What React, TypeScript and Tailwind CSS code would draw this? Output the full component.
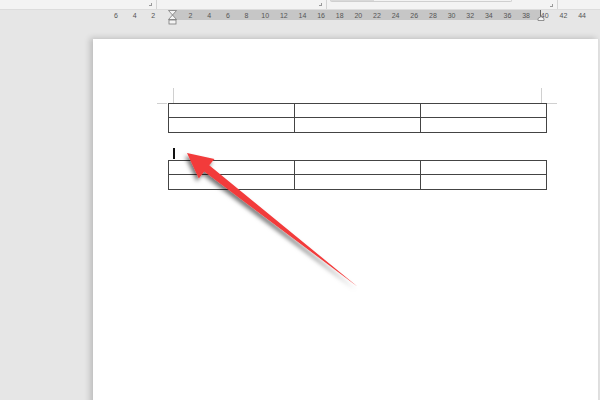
import React from "react";

const nums = [6, 4, 2, 0, 2, 4, 6, 8, 10, 12, 14, 16, 18, 20, 22, 24, 26, 28, 30, 32, 34, 36, 38, 40, 42, 44];

function Table() {
  const Row = ({ last }: { last?: boolean }) => (
    <div className={`flex h-[14px] ${last ? "" : "border-b border-[#444]"}`}>
      <div className="w-[126px] border-r border-[#444]" />
      <div className="w-[126px] border-r border-[#444]" />
      <div className="flex-1" />
    </div>
  );
  return (
    <div className="w-[379px] shrink-0 border border-[#444]">
      <Row />
      <Row last />
    </div>
  );
}

export default function App() {
  return (
    <div
      className="relative w-[600px] h-[400px] overflow-hidden bg-[#e6e6e6]"
      style={{ fontFamily: '"Liberation Sans", Arial, sans-serif' }}
    >
      {/* ribbon bottom strip */}
      <div className="flex h-[10px] bg-[#f3f3f3] border-b border-[#dcdcdc]">
        <div className="w-[157px] border-r border-[#d4d4d4] flex justify-end items-center pr-[4px]">
          <span className="block w-[3px] h-[3px] border-r border-b border-[#999]" />
        </div>
        <div className="w-[170px] border-r border-[#d4d4d4] flex justify-end items-center pr-[4px]">
          <div className="flex-1 h-full" />
          <span className="block w-[3px] h-[3px] border-r border-b border-[#999]" />
        </div>
        <div className="w-[231px] border-r border-[#d4d4d4] flex items-start">
          <div className="ml-[3px] w-[182px] h-[2px] border-b border-l border-r border-[#cfcfcf] rounded-b-[2px] flex">
            <div className="w-[43px] h-full bg-[#d9d9d9]" />
          </div>
          <div className="flex-1" />
          <span className="block mt-[4px] mr-[4px] w-[3px] h-[3px] border-r border-b border-[#999]" />
        </div>
        <div className="flex-1" />
      </div>

      {/* ruler */}
      <div className="relative h-[10px] bg-[linear-gradient(to_right,transparent_172px,#c6c6c6_172px,#c6c6c6_541px,transparent_541px)]">
        <div className="flex h-full items-center pl-[106.7px] text-[7px] leading-none text-[#555]">
          {nums.map((n, i) => (
            <div key={i} className="w-[18.65px] shrink-0 text-center">
              {i === 3 ? "" : n}
            </div>
          ))}
        </div>
        <div className="absolute left-[540px] top-0 w-[1px] h-[10px] bg-[#666]" />
      </div>

      {/* indent markers */}
      <svg className="absolute left-0 top-0 pointer-events-none" width="600" height="30">
        <polygon points="168.5,10.5 176.5,10.5 172.5,15 176.5,19.5 168.5,19.5 172.5,15" fill="#f4f4f4" stroke="#7a7a7a" strokeWidth="0.8" />
        <rect x="169" y="20" width="7" height="4" fill="#f4f4f4" stroke="#7a7a7a" strokeWidth="0.8" />
        <polygon points="538,20.5 538,18.5 541,16.5 544,18.5 544,20.5" fill="#f4f4f4" stroke="#7a7a7a" strokeWidth="0.8" />
      </svg>

      {/* page */}
      <div className="mt-[19px] ml-[93px] w-[506px] h-[400px] bg-white border-r border-[#dedede] shadow-[-3px_-1px_6px_rgba(0,0,0,0.18)]">
        <div className="pt-[49px] pl-[64px] w-[470px]">
          {/* top corner marks */}
          <div className="flex h-[15px]">
            <div className="ml-[16px] w-[1px] h-full bg-[#d0d0d0]" />
            <div className="ml-[367px] w-[1px] h-full bg-[#d0d0d0]" />
          </div>
          <div className="flex items-start">
            <div className="w-[10px] h-[1px] bg-[#d0d0d0] mr-[1px] shrink-0" />
            <Table />
            <div className="w-[10px] h-[1px] bg-[#d0d0d0] shrink-0" />
          </div>
          <div className="h-[15px]" />
          <div className="ml-[16px] w-[1.5px] h-[11px] bg-[#111]" />
          <div className="h-[1px]" />
          <div className="flex ml-[11px]">
            <Table />
          </div>
        </div>
      </div>

      {/* arrow */}
      <svg className="absolute inset-0 pointer-events-none" width="600" height="400">
        <defs>
          <filter id="sh" x="-20%" y="-20%" width="140%" height="140%">
            <feDropShadow dx="-2" dy="3" stdDeviation="2.2" floodColor="#000" floodOpacity="0.55" />
          </filter>
        </defs>
        <polygon
          points="187,153 214.5,159 209.2,165.3 358,287 204.2,171.5 198.8,178.5"
          fill="#f23b3b"
          filter="url(#sh)"
        />
      </svg>
    </div>
  );
}
